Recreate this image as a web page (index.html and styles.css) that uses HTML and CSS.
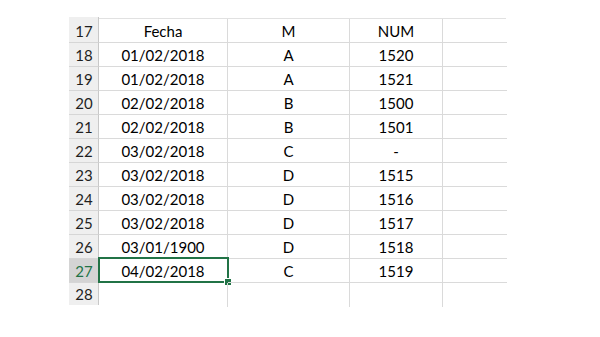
FILE: index.html
```html
<!DOCTYPE html>
<html>
<head>
<meta charset="utf-8">
<link rel="stylesheet" href="styles.css">
</head>
<body>
<div class="sheet">
  <div class="toprow"><div class="hd-top"></div><div class="top-rest"></div></div>
  <div class="row"><div class="hd">17</div><div class="c c1">Fecha</div><div class="c c2">M</div><div class="c c3">NUM</div><div class="c c4"></div></div>
  <div class="row"><div class="hd">18</div><div class="c c1">01/02/2018</div><div class="c c2">A</div><div class="c c3">1520</div><div class="c c4"></div></div>
  <div class="row"><div class="hd">19</div><div class="c c1">01/02/2018</div><div class="c c2">A</div><div class="c c3">1521</div><div class="c c4"></div></div>
  <div class="row"><div class="hd">20</div><div class="c c1">02/02/2018</div><div class="c c2">B</div><div class="c c3">1500</div><div class="c c4"></div></div>
  <div class="row"><div class="hd">21</div><div class="c c1">02/02/2018</div><div class="c c2">B</div><div class="c c3">1501</div><div class="c c4"></div></div>
  <div class="row"><div class="hd">22</div><div class="c c1">03/02/2018</div><div class="c c2">C</div><div class="c c3">-</div><div class="c c4"></div></div>
  <div class="row"><div class="hd">23</div><div class="c c1">03/02/2018</div><div class="c c2">D</div><div class="c c3">1515</div><div class="c c4"></div></div>
  <div class="row"><div class="hd">24</div><div class="c c1">03/02/2018</div><div class="c c2">D</div><div class="c c3">1516</div><div class="c c4"></div></div>
  <div class="row"><div class="hd">25</div><div class="c c1">03/02/2018</div><div class="c c2">D</div><div class="c c3">1517</div><div class="c c4"></div></div>
  <div class="row"><div class="hd">26</div><div class="c c1">03/01/1900</div><div class="c c2">D</div><div class="c c3">1518</div><div class="c c4"></div></div>
  <div class="row"><div class="hd hd-sel">27</div><div class="c c1 sel">04/02/2018<span class="selbox"><span class="handle"></span></span></div><div class="c c2">C</div><div class="c c3">1519</div><div class="c c4"></div></div>
  <div class="row last"><div class="hd">28</div><div class="c c1"></div><div class="c c2"></div><div class="c c3"></div><div class="c c4"></div></div>
</div>
</body>
</html>
```
FILE: styles.css
```css
html, body {
  margin: 0;
  padding: 0;
  background: #ffffff;
}
body {
  padding: 17px 0 0 69px;
  font-family: Lato, "Open Sans", sans-serif;
  font-size: 15px;
  color: #000000;
}
.sheet {
  width: 437px;
}
.toprow {
  display: flex;
  height: 2px;
}
.hd-top {
  width: 30px;
  box-sizing: border-box;
  background: #efefef;
  border-right: 1px solid #c8c8c8;
}
.top-rest {
  flex: 1;
  border-bottom: 1px solid #e1e1e1;
}
.row {
  display: flex;
  height: 24px;
}
.hd {
  flex: none;
  width: 30px;
  box-sizing: border-box;
  background: #efefef;
  border-right: 1px solid #c8c8c8;
  border-bottom: 1px solid #d6d6d6;
  display: flex;
  align-items: center;
  justify-content: center;
  padding-left: 1px;
  color: #1f1f1f;
  font-size: 15px;
}
.hd-sel {
  background: #d4d4d4;
  color: #217346;
}
.c {
  flex: none;
  box-sizing: border-box;
  border-right: 1px solid #dadada;
  border-bottom: 1px solid #dadada;
  display: flex;
  align-items: center;
  justify-content: center;
  position: relative;
}
.c1 { width: 129px; }
.c2 { width: 122px; }
.c3 { width: 93px; }
.c4 { width: 64px; border-right: none; }
.last .c, .last .hd { border-bottom: none; }
.last .hd { height: 22px; }
.selbox {
  position: absolute;
  left: -1px;
  top: -2px;
  right: -2px;
  bottom: -1px;
  border: 2px solid #217346;
}
.handle {
  position: absolute;
  right: -5px;
  bottom: -5px;
  width: 6px;
  height: 6px;
  background: #217346;
  border: 1px solid #ffffff;
}
```
